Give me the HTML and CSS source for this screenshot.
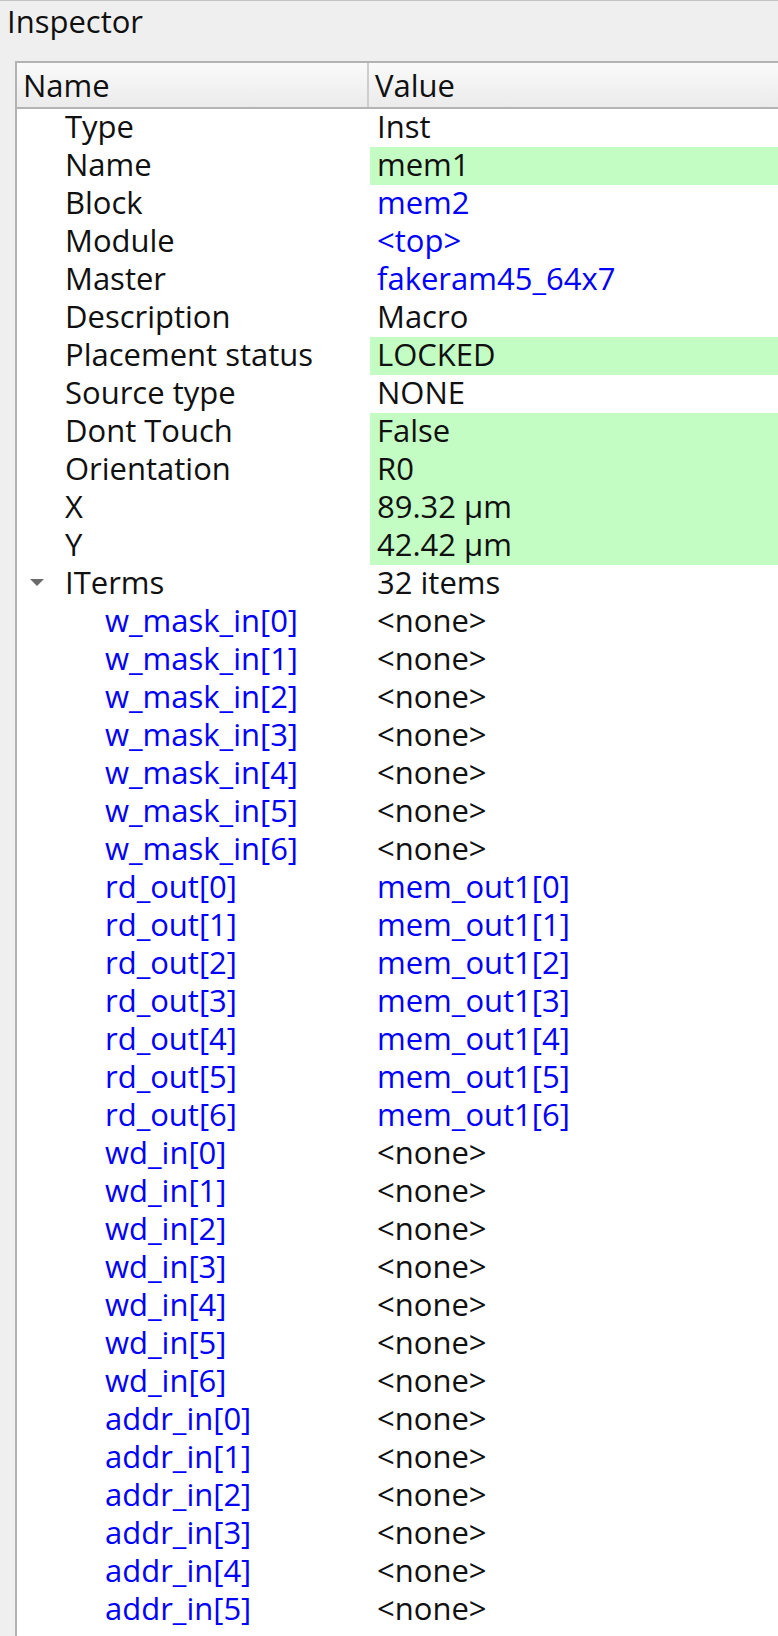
FILE: index.html
```html
<!DOCTYPE html>
<html>
<head>
<meta charset="utf-8">
<link rel="stylesheet" href="styles.css">
</head>
<body>
<div class="panel">
  <div class="title">Inspector</div>
  <div class="tree">
    <div class="header">
      <div class="hcell name">Name</div>
      <div class="hcell value">Value</div>
    </div>
    <div class="row"><div class="n l1">Type</div><div class="v">Inst</div></div>
    <div class="row"><div class="n l1">Name</div><div class="v hl">mem1</div></div>
    <div class="row"><div class="n l1">Block</div><div class="v link">mem2</div></div>
    <div class="row"><div class="n l1">Module</div><div class="v link">&lt;top&gt;</div></div>
    <div class="row"><div class="n l1">Master</div><div class="v link">fakeram45_64x7</div></div>
    <div class="row"><div class="n l1">Description</div><div class="v">Macro</div></div>
    <div class="row"><div class="n l1">Placement status</div><div class="v hl">LOCKED</div></div>
    <div class="row"><div class="n l1">Source type</div><div class="v">NONE</div></div>
    <div class="row"><div class="n l1">Dont Touch</div><div class="v hl">False</div></div>
    <div class="row"><div class="n l1">Orientation</div><div class="v hl">R0</div></div>
    <div class="row"><div class="n l1">X</div><div class="v hl">89.32 μm</div></div>
    <div class="row"><div class="n l1">Y</div><div class="v hl">42.42 μm</div></div>
    <div class="row"><div class="n l1 exp"><span class="arrow"></span>ITerms</div><div class="v">32 items</div></div>
    <div class="row"><div class="n l2 link">w_mask_in[0]</div><div class="v">&lt;none&gt;</div></div>
    <div class="row"><div class="n l2 link">w_mask_in[1]</div><div class="v">&lt;none&gt;</div></div>
    <div class="row"><div class="n l2 link">w_mask_in[2]</div><div class="v">&lt;none&gt;</div></div>
    <div class="row"><div class="n l2 link">w_mask_in[3]</div><div class="v">&lt;none&gt;</div></div>
    <div class="row"><div class="n l2 link">w_mask_in[4]</div><div class="v">&lt;none&gt;</div></div>
    <div class="row"><div class="n l2 link">w_mask_in[5]</div><div class="v">&lt;none&gt;</div></div>
    <div class="row"><div class="n l2 link">w_mask_in[6]</div><div class="v">&lt;none&gt;</div></div>
    <div class="row"><div class="n l2 link">rd_out[0]</div><div class="v link">mem_out1[0]</div></div>
    <div class="row"><div class="n l2 link">rd_out[1]</div><div class="v link">mem_out1[1]</div></div>
    <div class="row"><div class="n l2 link">rd_out[2]</div><div class="v link">mem_out1[2]</div></div>
    <div class="row"><div class="n l2 link">rd_out[3]</div><div class="v link">mem_out1[3]</div></div>
    <div class="row"><div class="n l2 link">rd_out[4]</div><div class="v link">mem_out1[4]</div></div>
    <div class="row"><div class="n l2 link">rd_out[5]</div><div class="v link">mem_out1[5]</div></div>
    <div class="row"><div class="n l2 link">rd_out[6]</div><div class="v link">mem_out1[6]</div></div>
    <div class="row"><div class="n l2 link">wd_in[0]</div><div class="v">&lt;none&gt;</div></div>
    <div class="row"><div class="n l2 link">wd_in[1]</div><div class="v">&lt;none&gt;</div></div>
    <div class="row"><div class="n l2 link">wd_in[2]</div><div class="v">&lt;none&gt;</div></div>
    <div class="row"><div class="n l2 link">wd_in[3]</div><div class="v">&lt;none&gt;</div></div>
    <div class="row"><div class="n l2 link">wd_in[4]</div><div class="v">&lt;none&gt;</div></div>
    <div class="row"><div class="n l2 link">wd_in[5]</div><div class="v">&lt;none&gt;</div></div>
    <div class="row"><div class="n l2 link">wd_in[6]</div><div class="v">&lt;none&gt;</div></div>
    <div class="row"><div class="n l2 link">addr_in[0]</div><div class="v">&lt;none&gt;</div></div>
    <div class="row"><div class="n l2 link">addr_in[1]</div><div class="v">&lt;none&gt;</div></div>
    <div class="row"><div class="n l2 link">addr_in[2]</div><div class="v">&lt;none&gt;</div></div>
    <div class="row"><div class="n l2 link">addr_in[3]</div><div class="v">&lt;none&gt;</div></div>
    <div class="row"><div class="n l2 link">addr_in[4]</div><div class="v">&lt;none&gt;</div></div>
    <div class="row"><div class="n l2 link">addr_in[5]</div><div class="v">&lt;none&gt;</div></div>
  </div>
</div>
</body>
</html>
```
FILE: styles.css
```css
html, body {
  margin: 0;
  padding: 0;
  height: 100%;
  overflow: hidden;
}
body {
  background: #efefef;
  font-family: "Open Sans", "DejaVu Sans", sans-serif;
  font-size: 31px;
  color: #101010;
}
.panel {
  border-top: 1px solid #c4c4c4;
  height: 100%;
  box-sizing: border-box;
  display: flex;
  flex-direction: column;
}
.title {
  flex: 0 0 60px;
  line-height: 40px;
  padding-left: 7px;
}
.tree {
  margin-left: 15px;
  border-left: 2px solid #b3b3b3;
  border-top: 2px solid #b3b3b3;
  background: #ffffff;
  flex: 1 1 auto;
  min-height: 0;
  overflow: hidden;
}
.header {
  display: flex;
  height: 44px;
  background: linear-gradient(#fafafa, #ebebeb);
  border-bottom: 2px solid #b3b3b3;
}
.hcell {
  line-height: 44px;
  padding-left: 6px;
}
.hcell.name {
  width: 344px;
  border-right: 2px solid #cdcdcd;
}
.hcell.value {
  flex: 1;
}
.row {
  display: flex;
  height: 38px;
  line-height: 34px;
}
.n {
  width: 353px;
  box-sizing: border-box;
  white-space: nowrap;
}
.l1 { padding-left: 48px; }
.l2 { padding-left: 88px; }
.exp { position: relative; }
.arrow {
  position: absolute;
  left: 13px;
  top: 14px;
  width: 0;
  height: 0;
  border-left: 7px solid transparent;
  border-right: 7px solid transparent;
  border-top: 7px solid #6a6a6a;
}
.v {
  flex: 1;
  padding-left: 7px;
  white-space: nowrap;
}
.hl { background: #c3fdc3; }
.link { color: #0000ff; }
```
